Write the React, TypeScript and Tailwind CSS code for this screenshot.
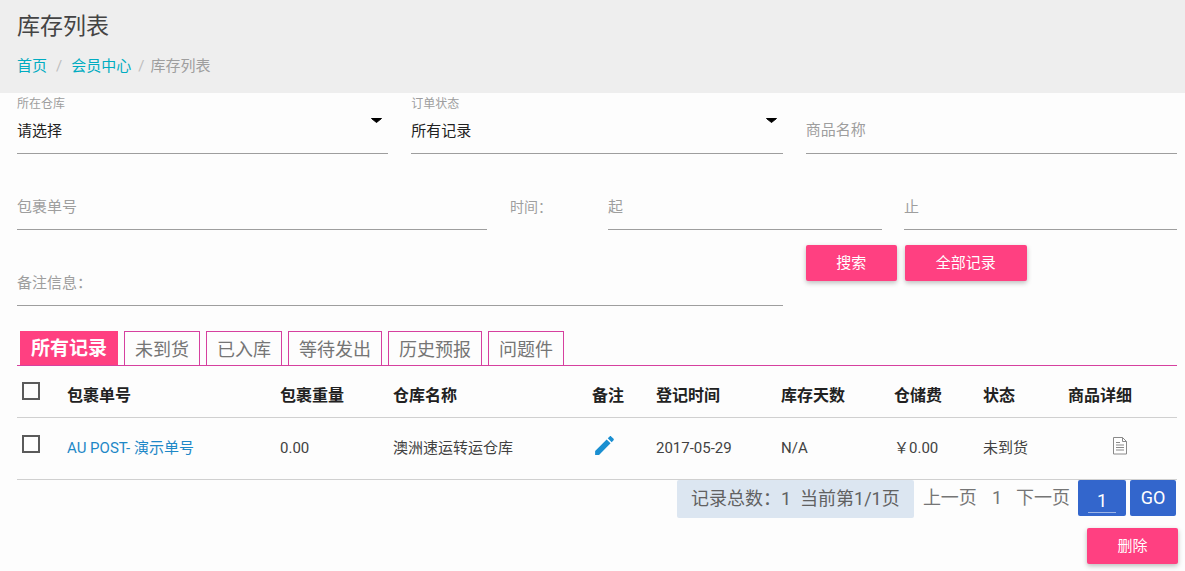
const font = "font-['Roboto','Noto_Sans_CJK_SC',sans-serif]";

const tabs = ["未到货", "已入库", "等待发出", "历史预报", "问题件"];

const gridCols = "grid grid-cols-[50px_213px_113px_199px_64px_125px_113px_89px_85px_1fr]";

function Caret() {
  return (
    <svg width="11" height="5" viewBox="0 0 11 5" className="absolute right-[6px] top-[25px]">
      <path d="M0.5 0.5h10L5.5 4.5z" fill="#000" stroke="#000" strokeLinejoin="round" />
    </svg>
  );
}

function Underlined({ children, className = "" }: { children: React.ReactNode; className?: string }) {
  return (
    <div className={["relative h-[61px] border-b border-[#9e9e9e]", className].join(" ")}>{children}</div>
  );
}

function SelectField({ label, value }: { label: string; value: string }) {
  return (
    <Underlined>
      <div className="pt-[4px] text-xs leading-[14px] text-[#9e9e9e]">{label}</div>
      <div className="mt-[9px] text-[15px] leading-[22px] text-[#212121]">{value}</div>
      <Caret />
    </Underlined>
  );
}

function TextField({ placeholder, className = "", top = "pt-[27px]" }: { placeholder: string; className?: string; top?: string }) {
  return (
    <Underlined className={className}>
      <div className={[top, "text-[15px] leading-[22px] text-[#9e9e9e]"].join(" ")}>{placeholder}</div>
    </Underlined>
  );
}

function PinkButton({ children, className = "" }: { children: React.ReactNode; className?: string }) {
  return (
    <button
      className={[
        "h-9 rounded-[2px] bg-[#ff4081] text-[15px] text-white shadow-[0_2px_5px_rgba(0,0,0,0.26)]",
        className,
      ].join(" ")}
    >
      {children}
    </button>
  );
}

function Checkbox() {
  return <div className="ml-[5px] h-[18px] w-[18px] border-2 border-[#5a5a5a]" />;
}

function DocIcon() {
  return (
    <svg width="16" height="18" viewBox="0 0 16 18" fill="none" stroke="#8a8a8a" strokeWidth="1">
      <path d="M1.5 0.5h9l4 4v12.5h-13z" fill="#fff" />
      <path d="M10.5 0.5v4h4" />
      <path d="M4 5.5h4M4 8h8M4 10.5h8M4 13h8" />
    </svg>
  );
}

export default function App() {
  return (
    <div className={[font, "h-[571px] w-[1185px] overflow-hidden bg-[#fdfdfd]"].join(" ")}>
      {/* Page header */}
      <div className="h-[93px] bg-[#eeeeee] pl-[17px]">
        <h1 className="pt-[12px] text-[23px] leading-[30px] text-[#444]">库存列表</h1>
        <div className="mt-[13px] flex text-[15px] leading-[22px]">
          <span className="text-[#00acc1]">首页</span>
          <span className="mx-[9px] text-[#bdbdbd]">/</span>
          <span className="text-[#00acc1]">会员中心</span>
          <span className="ml-[7px] mr-[6px] text-[#bdbdbd]">/</span>
          <span className="text-[#9e9e9e]">库存列表</span>
        </div>
      </div>

      {/* Filters */}
      <div className="pl-[17px] pr-[8px]">
        <div className="grid grid-cols-3 gap-x-[23px]">
          <SelectField label="所在仓库" value="请选择" />
          <SelectField label="订单状态" value="所有记录" />
          <TextField placeholder="商品名称" top="pt-[26px]" />
        </div>

        <div className="mt-[15px] flex">
          <TextField placeholder="包裹单号" className="w-[470px]" />
          <div className="ml-[23px] w-[98px] pt-[27px] text-sm leading-[22px] text-[#9e9e9e]">时间：</div>
          <TextField placeholder="起" className="w-[274px]" />
          <TextField placeholder="止" className="ml-[22px] flex-1" />
        </div>

        <div className="mt-[15px] grid grid-cols-3 gap-x-[23px]">
          <TextField placeholder="备注信息：" className="col-span-2" />
          <div className="flex gap-2">
            <PinkButton className="w-[91px]">搜索</PinkButton>
            <PinkButton className="w-[122px]">全部记录</PinkButton>
          </div>
        </div>

        {/* Tabs */}
        <div className="mt-[25px] flex h-[35px] gap-[6px] border-b border-[#d6409f] pl-[3px]">
          <div className="flex h-[34px] w-[98px] items-center justify-center bg-[#ff4081] pt-[3px] text-[19px] font-bold text-white">
            所有记录
          </div>
          {tabs.map((t) => (
            <div
              key={t}
              className="flex h-[34px] items-center justify-center border border-b-0 border-[#d6409f] px-[10px] pt-[3px] text-lg text-[#757575]"
            >
              {t}
            </div>
          ))}
        </div>

        {/* Table */}
        <div className={[gridCols, "h-[52px] items-center border-b border-[#d0d0d0] pt-2 text-base font-bold text-[#212121]"].join(" ")}>
          <div className="-mt-[10px]">
            <Checkbox />
          </div>
          <div>包裹单号</div>
          <div>包裹重量</div>
          <div>仓库名称</div>
          <div>备注</div>
          <div>登记时间</div>
          <div>库存天数</div>
          <div>仓储费</div>
          <div>状态</div>
          <div>商品详细</div>
        </div>
        <div className={[gridCols, "h-[62px] items-center border-b border-[#d0d0d0] text-[15px] text-[#424242]"].join(" ")}>
          <div className="-mt-[10px]">
            <Checkbox />
          </div>
          <div className="text-[#1e88c7]">AU POST- 演示单号</div>
          <div>0.00</div>
          <div>澳洲速运转运仓库</div>
          <div className="-mt-[6px]">
            <svg width="25" height="25" viewBox="0 0 24 24" fill="#1a8fd1">
              <path d="M3 17.25V21h3.75L17.81 9.94l-3.75-3.75L3 17.25zM20.71 7.04c.39-.39.39-1.02 0-1.41l-2.34-2.34c-.39-.39-1.02-.39-1.41 0l-1.83 1.83 3.75 3.75 1.83-1.83z" />
            </svg>
          </div>
          <div>2017-05-29</div>
          <div>N/A</div>
          <div>￥0.00</div>
          <div>未到货</div>
          <div className="-mt-[6px] pl-[44px]">
            <DocIcon />
          </div>
        </div>

        {/* Pagination */}
        <div className="flex h-[38px] items-start justify-end pr-[1px] text-lg text-[#757575]">
          <div className="flex h-[38px] w-[237px] items-center justify-center rounded-[2px] bg-[#dce6f1] text-[#616161]">
            记录总数：1&nbsp; 当前第1/1页
          </div>
          <div className="ml-[9px] flex h-[36px] items-center">上一页</div>
          <div className="ml-[15px] flex h-[36px] items-center">1</div>
          <div className="ml-[14px] flex h-[36px] items-center">下一页</div>
          <div className="ml-[8px] flex h-[36px] w-[48px] justify-center rounded-[2px] bg-[#3366cc] text-white">
            <div className="mt-[5px] h-[28px] w-[28px] border-b border-[#9db5e6] pt-[4px] text-center leading-[24px]">1</div>
          </div>
          <div className="ml-[4px] flex h-[36px] w-[46px] items-center justify-center rounded-[2px] bg-[#3366cc] text-white">
            GO
          </div>
        </div>

        <div className="mt-[10px] -mr-[1px] flex justify-end">
          <PinkButton className="w-[91px]">删除</PinkButton>
        </div>
      </div>
    </div>
  );
}
